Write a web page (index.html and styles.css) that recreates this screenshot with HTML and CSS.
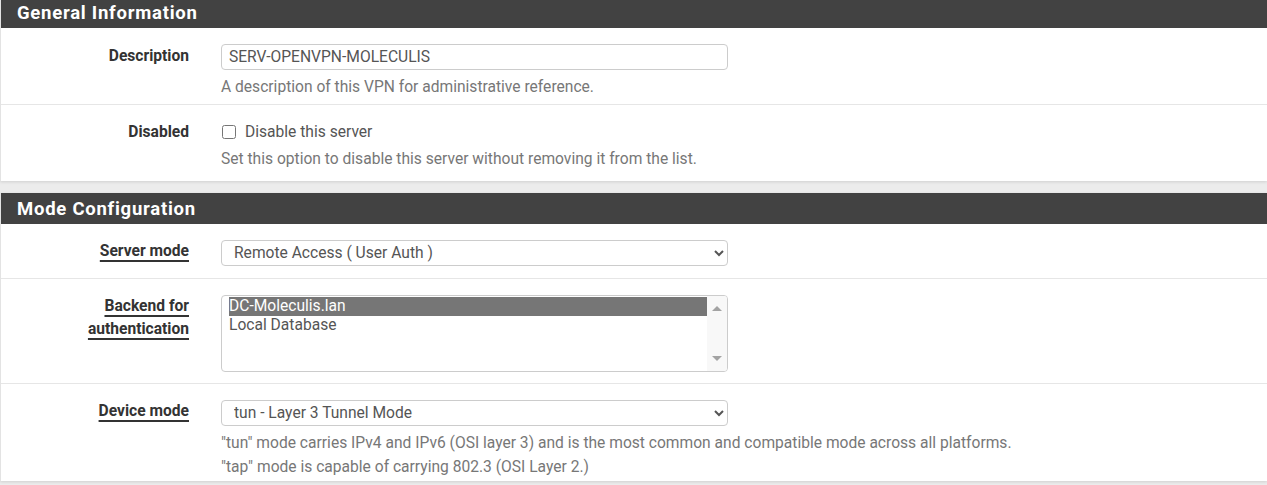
FILE: index.html
```html
<!DOCTYPE html>
<html lang="en">
<head>
<meta charset="utf-8">
<title>OpenVPN Server</title>
<link rel="stylesheet" href="styles.css">
</head>
<body>
<div class="panel first">
  <div class="panel-heading"><h2>General Information</h2></div>
  <div class="row row-desc">
    <div class="label">Description</div>
    <div class="field">
      <input class="text-input" type="text" value="SERV-OPENVPN-MOLECULIS">
      <div class="help">A description of this VPN for administrative reference.</div>
    </div>
  </div>
  <div class="row row-disabled">
    <div class="label">Disabled</div>
    <div class="field">
      <label class="check"><input type="checkbox"> Disable this server</label>
      <div class="help">Set this option to disable this server without removing it from the list.</div>
    </div>
  </div>
</div>

<div class="panel">
  <div class="panel-heading"><h2>Mode Configuration</h2></div>
  <div class="row row-server">
    <div class="label"><span class="ul">Server mode</span></div>
    <div class="field">
      <select class="select-input"><option>Remote Access ( User Auth )</option></select>
    </div>
  </div>
  <div class="row row-backend">
    <div class="label label-multi"><span class="ul">Backend for</span><br><span class="ul">authentication</span></div>
    <div class="field">
      <div class="listbox">
        <div class="options">
          <div class="opt selected">DC-Moleculis.lan</div>
          <div class="opt">Local Database</div>
        </div>
        <div class="scrollbar">
          <span class="arrow up"></span>
          <span class="arrow down"></span>
        </div>
      </div>
    </div>
  </div>
  <div class="row row-device">
    <div class="label"><span class="ul">Device mode</span></div>
    <div class="field">
      <select class="select-input"><option>tun - Layer 3 Tunnel Mode</option></select>
      <div class="help help-multi">"tun" mode carries IPv4 and IPv6 (OSI layer 3) and is the most common and compatible mode across all platforms.<br>"tap" mode is capable of carrying 802.3 (OSI Layer 2.)</div>
    </div>
  </div>
</div>
</body>
</html>
```

FILE: styles.css
```css
html, body {
  margin: 0;
  padding: 0;
}
body {
  background: #ececec;
  font-family: Roboto, "Liberation Sans", sans-serif;
  font-size: 15.6px;
  color: #333;
  overflow: hidden;
}
.panel {
  background: #fff;
  margin: 0 0 12px 0;
  border-left: 1px solid #e3e3e3;
  box-shadow: 0 1px 3px rgba(0,0,0,0.12);
}
.panel.first {
  margin-top: -3px;
}
.panel-heading {
  background: #424242;
  height: 31px;
  display: flex;
  align-items: center;
  padding-left: 16px;
}
.panel-heading h2 {
  margin: 0;
  color: #fff;
  font-size: 18.5px;
  font-weight: 700;
  letter-spacing: 0.75px;
}
.row {
  display: grid;
  grid-template-columns: 188px 1fr;
  column-gap: 32px;
  border-bottom: 1px solid #e6e6e6;
}
.row:last-child {
  border-bottom: none;
}
.label {
  text-align: right;
  font-weight: 700;
  color: #333;
  line-height: 20px;
}
.ul {
  text-decoration: underline;
  text-decoration-thickness: 2px;
  text-underline-offset: 4px;
}
.label-multi {
  line-height: 23px;
}
.field {
  display: flex;
  flex-direction: column;
  align-items: flex-start;
}
.help {
  color: #777;
  line-height: 24px;
  margin-top: 5px;
}
.text-input,
.select-input {
  box-sizing: border-box;
  width: 507px;
  height: 26px;
  border: 1px solid #ccc;
  border-radius: 4px;
  font-family: Roboto, "Liberation Sans", sans-serif;
  font-size: 15.6px;
  color: #555;
  background: #fff;
}
.text-input {
  padding: 0 7px;
}
.select-input {
  padding: 0 8px;
}
.check {
  display: flex;
  align-items: center;
  gap: 9px;
  line-height: 20px;
  color: #555;
}
.check input {
  margin: 0 0 0 1px;
  width: 14px;
  height: 14px;
}

/* rows */
.row-desc { padding: 16px 0 5px; }
.row-desc .label { padding-top: 2px; }
.row-disabled { padding: 17px 0 10px; }
.row-server { padding: 16px 0 12px; }
.row-server .label { padding-top: 1px; }
.row-backend { padding: 16px 0 11px; }
.row-device { padding: 16px 0 2px; }
.row-device .label { padding-top: 1px; }

.listbox {
  box-sizing: border-box;
  width: 507px;
  height: 77px;
  border: 1px solid #ccc;
  border-radius: 4px;
  display: flex;
  overflow: hidden;
  background: #fff;
}
.options {
  flex: 1;
  padding: 1px 0 0 7px;
  color: #555;
}
.opt {
  height: 19px;
  line-height: 19px;
}
.opt.selected {
  background: #767676;
  color: #fff;
}
.scrollbar {
  width: 20px;
  background: #f8f8f8;
  position: relative;
}
.arrow {
  position: absolute;
  left: 5px;
  width: 0;
  height: 0;
  border-left: 5px solid transparent;
  border-right: 5px solid transparent;
}
.arrow.up {
  top: 10px;
  border-bottom: 5px solid #a3a3a3;
}
.arrow.down {
  bottom: 10px;
  border-top: 5px solid #a3a3a3;
}
```
